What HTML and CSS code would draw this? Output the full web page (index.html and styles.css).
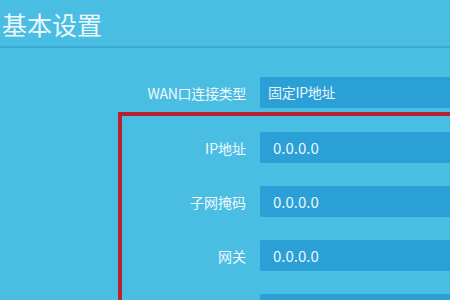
FILE: index.html
```html
<!DOCTYPE html>
<html lang="zh-CN">
<head>
    <meta charset="UTF-8">
    <title>基本设置</title>
    <link rel="stylesheet" href="styles.css">
</head>
<body>
    <div class="header">基本设置</div>

    <div class="row wan">
        <label class="label">WAN口连接类型</label>
        <div class="field">固定IP地址</div>
    </div>

    <div class="group">
        <div class="row">
            <label class="label">IP地址</label>
            <div class="field num">0.0.0.0</div>
        </div>
        <div class="row">
            <label class="label">子网掩码</label>
            <div class="field num">0.0.0.0</div>
        </div>
        <div class="row">
            <label class="label">网关</label>
            <div class="field num">0.0.0.0</div>
        </div>
        <div class="row">
            <label class="label"></label>
            <div class="field num"></div>
        </div>
    </div>
</body>
</html>
```
FILE: styles.css
```css
html, body {
    margin: 0;
    padding: 0;
    height: 100vh;
    overflow: hidden;
    background-color: #49bde2;
    font-family: "Noto Sans CJK SC", "Liberation Sans", sans-serif;
}

.header {
    height: 46px;
    padding-left: 2px;
    font-size: 25px;
    line-height: 48px;
    color: #eef8fc;
    border-bottom: 2px solid #3aa9d4;
    box-sizing: content-box;
}

.row {
    display: grid;
    grid-template-columns: 246px 1fr;
    column-gap: 14px;
    align-items: center;
    height: 31px;
    margin-bottom: 23px;
}

.wan {
    margin-top: 29px;
    margin-bottom: 4px;
    letter-spacing: -0.3px;
}

.label {
    text-align: right;
    font-size: 14px;
    color: #f2f9fc;
}

.field {
    height: 31px;
    line-height: 31px;
    background-color: #2ba0d6;
    border-radius: 2px 0 0 2px;
    padding-left: 8px;
    font-size: 14px;
    color: #eaf5fb;
    margin-right: -10px;
}

.num {
    padding-left: 13px;
    font-size: 15px;
}

.group {
    margin-left: 118px;
    margin-right: -20px;
    border: 4px solid #b8222c;
    padding-top: 16px;
}

.group .row {
    grid-template-columns: 124px 1fr;
}
```
